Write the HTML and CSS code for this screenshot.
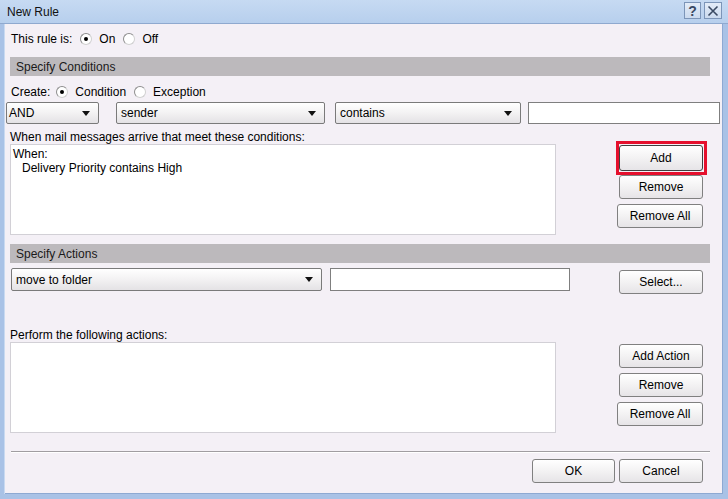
FILE: index.html
```html
<!DOCTYPE html>
<html>
<head>
<meta charset="utf-8">
<link rel="stylesheet" href="styles.css">
</head>
<body>
<div class="window">
  <div class="titlebar">
    <span class="title">New Rule</span>
    <span class="tb-buttons">
      <span class="tb-btn">?</span>
      <span class="tb-btn close">
        <svg width="12" height="12" viewBox="0 0 12 12"><path d="M1.5 1.5 L10.5 10.5 M10.5 1.5 L1.5 10.5" stroke="#3a4a63" stroke-width="1.6"/></svg>
      </span>
    </span>
  </div>
  <div class="content">
    <div class="radio-row first">
      <span class="lbl">This rule is:</span>
      <span class="radio checked"></span><span class="rtext">On</span>
      <span class="radio"></span><span class="rtext">Off</span>
    </div>
    <div class="section-header">Specify Conditions</div>
    <div class="radio-row create">
      <span class="lbl">Create:</span>
      <span class="radio checked"></span><span class="rtext">Condition</span>
      <span class="radio"></span><span class="rtext">Exception</span>
    </div>
    <div class="cond-row">
      <div class="select sel-and"><span>AND</span><span class="arrow"></span></div>
      <div class="select sel-sender"><span>sender</span><span class="arrow"></span></div>
      <div class="select sel-contains"><span>contains</span><span class="arrow"></span></div>
      <div class="textbox tb-cond"></div>
    </div>
    <div class="list-area cond-area">
      <div class="list-col">
        <div class="list-label">When mail messages arrive that meet these conditions:</div>
        <div class="listbox">
          <div class="li">When:</div>
          <div class="li indent">Delivery Priority contains High</div>
        </div>
      </div>
      <div class="btn-col cond-btns">
        <div class="highlight"><div class="btn add">Add</div></div>
        <div class="btn">Remove</div>
        <div class="btn wide">Remove All</div>
      </div>
    </div>
    <div class="section-header actions">Specify Actions</div>
    <div class="action-row">
      <div class="select sel-action"><span>move to folder</span><span class="arrow"></span></div>
      <div class="textbox tb-action"></div>
      <div class="btn select-btn">Select...</div>
    </div>
    <div class="list-area act-area">
      <div class="list-col">
        <div class="list-label">Perform the following actions:</div>
        <div class="listbox"></div>
      </div>
      <div class="btn-col act-btns">
        <div class="btn">Add Action</div>
        <div class="btn">Remove</div>
        <div class="btn wide">Remove All</div>
      </div>
    </div>
    <div class="separator"></div>
    <div class="footer">
      <div class="btn ok">OK</div>
      <div class="btn cancel">Cancel</div>
    </div>
  </div>
</div>
</body>
</html>
```

FILE: styles.css
```css
* { box-sizing: border-box; }
html, body { margin: 0; padding: 0; }
body {
  font-family: "Liberation Sans", Arial, sans-serif;
  font-size: 12px;
  color: #000;
  background: #f4f0f6;
}
.window {
  width: 728px;
  height: 499px;
  background: #f4f0f6;
  border-left: 4px solid #a9c2e6;
  border-right: 5px solid #a9c2e6;
  border-bottom: 5px solid #a9c2e6;
  box-shadow: inset 1px 0 0 #c9daf1, inset -1px -1px 0 #8ea9d2;
  display: flex;
  flex-direction: column;
  position: relative;
}
.titlebar {
  height: 24px;
  margin-left: -4px;
  margin-right: -5px;
  background: linear-gradient(#c6daf2, #b7cfed);
  border-bottom: 1px solid #8fa9cf;
  display: flex;
  align-items: center;
  justify-content: space-between;
  padding-left: 7px;
  padding-right: 6px;
}
.title { font-size: 12px; color: #111; margin-top: 1px; }
.tb-buttons { display: flex; gap: 3px; margin-top: -2px; }
.tb-btn {
  width: 17px;
  height: 17px;
  border: 1px solid #7c95b8;
  background: linear-gradient(#e3ecf8, #cbdaee);
  display: flex;
  align-items: center;
  justify-content: center;
  font-size: 14px;
  font-weight: bold;
  color: #3a4a63;
}
.tb-btn.close { width: 18px; }
.content {
  padding: 6px 13px 0 6px;
  flex: 1;
}
.radio-row {
  height: 18px;
  display: flex;
  align-items: center;
  padding-left: 1px;
}
.radio-row .lbl { margin-right: 8px; }
.radio {
  width: 12px;
  height: 12px;
  border-radius: 50%;
  border: 1px solid #8d8d8d;
  border-right-color: #d0d0d0;
  border-bottom-color: #d0d0d0;
  background: #fff;
  position: relative;
  margin-right: 7px;
}
.radio.checked::after {
  content: "";
  position: absolute;
  left: 3px;
  top: 3px;
  width: 4px;
  height: 4px;
  border-radius: 50%;
  background: #000;
}
.rtext { margin-right: 8px; }
.section-header {
  margin-top: 9px;
  height: 19px;
  line-height: 20px;
  background: #bcb9bc;
  padding-left: 6px;
  color: #1a1a1a;
}
.radio-row.create { margin-top: 7px; }
.create .lbl { margin-right: 6px; }
.cond-row {
  display: flex;
  margin-top: 1px;
  margin-left: -4px;
  margin-right: -10px;
  height: 22px;
}
.select {
  height: 22px;
  border: 1px solid #7a7a7a;
  border-radius: 2px;
  background: linear-gradient(#ffffff 0%, #f4f3f4 45%, #e4e2e5 100%);
  display: flex;
  align-items: center;
  justify-content: space-between;
  padding: 0 8px 0 4px;
}
.arrow {
  width: 0;
  height: 0;
  border-left: 4px solid transparent;
  border-right: 4px solid transparent;
  border-top: 5px solid #111;
}
.sel-and { width: 93px; padding-left: 2px; }
.sel-sender { width: 209px; margin-left: 17px; }
.sel-contains { width: 186px; margin-left: 10px; }
.textbox {
  height: 22px;
  border: 1px solid #7f7f7f;
  background: #fff;
}
.tb-cond { width: 192px; margin-left: 7px; }
.list-area { display: flex; }
.list-col { width: 546px; }
.list-label { height: 14px; line-height: 14px; margin-top: 6px; }
.listbox {
  height: 91px;
  background: #fff;
  border: 1px solid #d2d0d6;
  padding: 2px 2px;
}
.li { line-height: 14px; }
.li.indent { padding-left: 9px; }
.btn-col {
  margin-left: 60px;
  display: flex;
  flex-direction: column;
  align-items: flex-end;
  width: 91px;
}
.btn {
  width: 84px;
  height: 24px;
  border: 1px solid #808080;
  border-radius: 3px;
  background: linear-gradient(#ffffff 0%, #f3f2f3 50%, #e6e4e7 100%);
  display: flex;
  align-items: center;
  justify-content: center;
  color: #000;
}
.btn.wide { width: 86px; }
.cond-btns { margin-top: 17px; padding-right: 4px; }
.highlight {
  border: 3px solid #e5102d;
  width: 91px;
  height: 34px;
  padding: 1px 1px 1px 0;
  margin-right: -4px;
  display: flex;
  justify-content: flex-start;
}
.btn.add {
  height: 26px;
  border-color: #404040;
}
.cond-btns .btn.wide { margin-top: 5px; }
.section-header.actions { margin-top: 9px; }
.action-row {
  display: flex;
  margin-top: 5px;
  height: 26px;
}
.sel-action { width: 311px; margin-left: 1px; padding-left: 4px; height: 23px; }
.tb-action { width: 240px; margin-left: 8px; height: 23px; }
.select-btn { margin-left: 49px; margin-top: 2px; }
.act-area .list-label { margin-top: 34px; }
.act-btns { margin-top: 50px; padding-right: 4px; }
.act-btns .btn + .btn { margin-top: 5px; }
.separator {
  margin-top: 18px;
  margin-left: 1px;
  height: 2px;
  border-top: 1px solid #a09da1;
  border-bottom: 1px solid #ffffff;
}
.footer {
  display: flex;
  justify-content: flex-end;
  margin-top: 6px;
  padding-right: 7px;
}
.btn.ok { width: 83px; }
.btn.cancel { width: 84px; margin-left: 4px; }
```
